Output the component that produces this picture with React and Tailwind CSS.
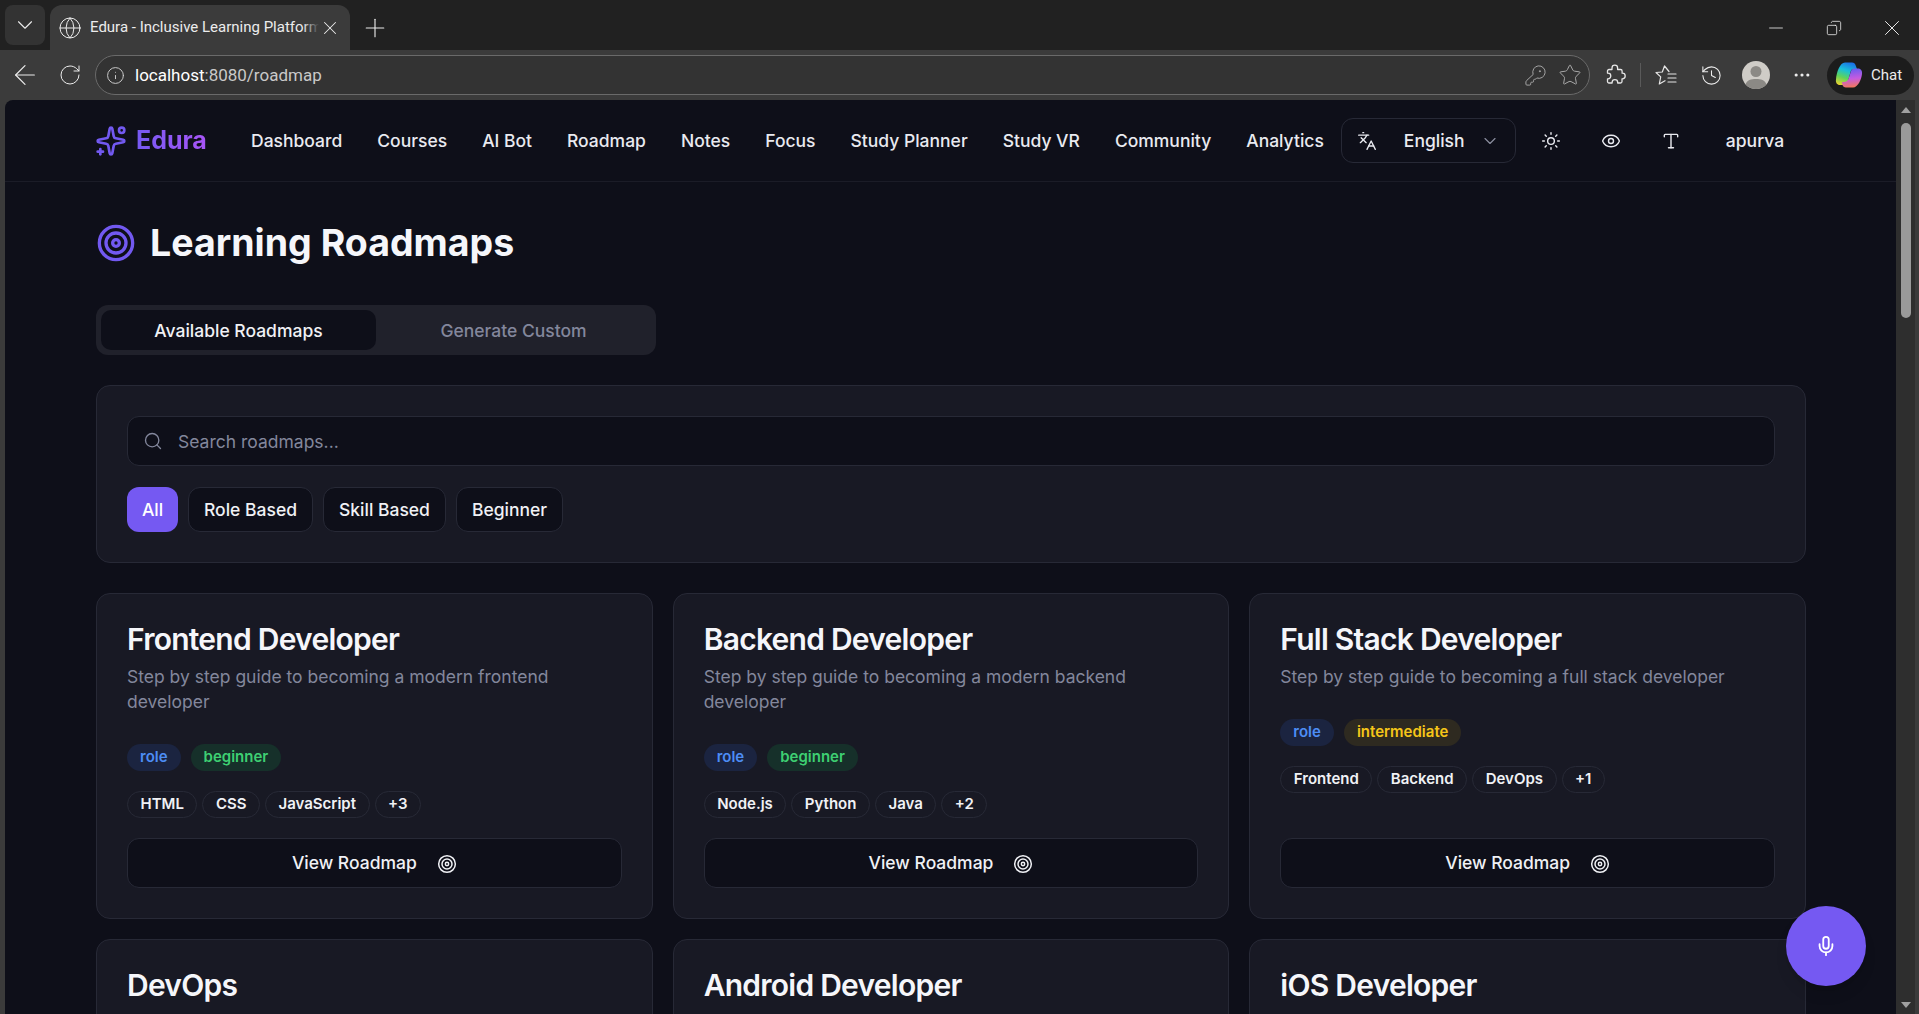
import React from "react";
import {
  ArrowLeft,
  ChevronDown,
  Copy,
  Eye,
  Globe,
  History,
  Info,
  KeyRound,
  Languages,
  Mic,
  Minus,
  MoreHorizontal,
  Plus,
  RotateCw,
  Search,
  Sparkles,
  Star,
  Sun,
  Target,
  Type,
  X,
} from "lucide-react";

const navLinks = [
  "Dashboard",
  "Courses",
  "AI Bot",
  "Roadmap",
  "Notes",
  "Focus",
  "Study Planner",
  "Study VR",
  "Community",
  "Analytics",
];

const filters = ["Role Based", "Skill Based", "Beginner"];

const roadmaps = [
  {
    title: "Frontend Developer",
    desc: "Step by step guide to becoming a modern frontend developer",
    level: "beginner",
    tags: ["HTML", "CSS", "JavaScript", "+3"],
  },
  {
    title: "Backend Developer",
    desc: "Step by step guide to becoming a modern backend developer",
    level: "beginner",
    tags: ["Node.js", "Python", "Java", "+2"],
  },
  {
    title: "Full Stack Developer",
    desc: "Step by step guide to becoming a full stack developer",
    level: "intermediate",
    tags: ["Frontend", "Backend", "DevOps", "+1"],
  },
];

const nextRow = ["DevOps", "Android Developer", "iOS Developer"];

// Edge's multicolour chat logo
function CopilotLogo() {
  return (
    <svg width="28" height="28" viewBox="0 0 28 28" fill="none">
      <defs>
        <linearGradient id="copA" x1="14" y1="1" x2="6" y2="25" gradientUnits="userSpaceOnUse">
          <stop offset="0" stopColor="#1b6fe8" />
          <stop offset="0.35" stopColor="#19c0d8" />
          <stop offset="0.65" stopColor="#5fd35a" />
          <stop offset="1" stopColor="#f5d32c" />
        </linearGradient>
        <linearGradient id="copB" x1="16" y1="8" x2="18" y2="27" gradientUnits="userSpaceOnUse">
          <stop offset="0" stopColor="#6b5cf0" />
          <stop offset="0.5" stopColor="#c45be0" />
          <stop offset="1" stopColor="#f77a52" />
        </linearGradient>
      </defs>
      <path d="M10 1.500h7c2 0 3 1 3.500 2.500L22 8h-3c-2 0-3 1-3.500 3L13 20c-.8 2.500-2.500 4-5 4H5c-3 0-4.500-2.500-4-5.500C1.500 11 5 1.500 10 1.500z" fill="url(#copA)" />
      <path d="M18 26.500h-7c-2 0-3-1-3.500-2.500L7 21h2c2.500 0 4-1.500 4.800-4L16 10c.600-1.500 1.500-2.500 3.500-2.500H23c3 0 4.500 2.500 4 5.500-.5 5-4 13.500-9 13.500z" fill="url(#copB)" />
    </svg>
  );
}

function FavoritesIcon() {
  return (
    <svg width="24" height="24" viewBox="0 0 24 24" fill="none" stroke="#e6e6e6" strokeWidth="1.2" strokeLinejoin="round" strokeLinecap="round">
      <path d="M15 8.500 10.500 3 8.300 9 2 9.500l4.700 4.400L5.300 21l5.700-3.300" />
      <path d="M14 11h8M14 15h8M14 19h8" />
    </svg>
  );
}

function PuzzleIcon() {
  return (
    <svg width="24" height="24" viewBox="0 0 24 24" fill="none" stroke="#e6e6e6" strokeWidth="1.3" strokeLinejoin="round">
      <path d="M9 5a2.800 2.800 0 0 1 5.600 0v1.500h3a1.500 1.500 0 0 1 1.500 1.500v2.200h.3a2.800 2.800 0 0 1 0 5.600H19v2.700a1.500 1.500 0 0 1-1.500 1.500h-2.800v-.5a2.800 2.800 0 0 0-5.600 0v.5H6a1.500 1.500 0 0 1-1.500-1.500v-2.700H5a2.800 2.800 0 0 0 0-5.600h-.5V8A1.500 1.500 0 0 1 6 6.500h3z" />
    </svg>
  );
}

function Avatar() {
  return (
    <svg width="28" height="28" viewBox="0 0 28 28">
      <circle cx="14" cy="14" r="14" fill="#cfccc7" />
      <circle cx="14" cy="10.500" r="5.500" fill="#8b8985" />
      <path d="M3.500 23.500c1.500-4.500 5.500-5.500 10.500-5.500s9 1 10.500 5.500A14 14 0 0 1 14 28a14 14 0 0 1-10.500-4.500z" fill="#8b8985" />
    </svg>
  );
}

function BrowserChrome() {
  return (
    <div className="shrink-0 font-['Roboto',sans-serif]">
      {/* Tab strip */}
      <div className="h-[50px] bg-[#212121] flex items-end pl-[5px] text-[#ececec]">
        <div className="h-[40px] w-[40px] mb-[5px] rounded-lg bg-[#333333] flex items-center justify-center">
          <ChevronDown size={26} strokeWidth={1} />
        </div>
        <div className="h-[45px] w-[300px] ml-[5px] rounded-t-xl bg-[#3b3b3b] flex items-center pl-[8px] pr-[9px]">
          <Globe size={24} strokeWidth={1} className="shrink-0" />
          <div className="relative ml-[8px] flex-1 overflow-hidden">
            <span className="block text-[15px] leading-[20px] whitespace-nowrap pb-[1px]">
              Edura - Inclusive Learning Platform
            </span>
            <span className="absolute right-0 top-0 bottom-0 w-[16px] bg-linear-to-r from-transparent to-[#3b3b3b]" />
          </div>
          <X size={22} strokeWidth={1.1} className="shrink-0" />
        </div>
        <div className="h-[45px] w-[50px] flex items-center justify-center">
          <Plus size={30} strokeWidth={0.9} />
        </div>
        <div className="flex-1 h-[45px] flex items-center justify-end">
          <div className="w-[58px] flex justify-center">
            <Minus size={22} strokeWidth={0.9} />
          </div>
          <div className="w-[58px] mr-[2px] flex justify-center">
            <Copy size={16} strokeWidth={1.2} className="-scale-x-100" />
          </div>
          <div className="w-[54px] flex justify-center">
            <X size={26} strokeWidth={0.9} />
          </div>
        </div>
      </div>
      {/* Address bar */}
      <div className="h-[50px] bg-[#3b3b3b] flex items-center text-[#ececec]">
        <div className="w-[45px] flex justify-center pl-[5px]">
          <ArrowLeft size={32} strokeWidth={0.9} />
        </div>
        <div className="w-[45px] flex justify-center pl-[5px]">
          <RotateCw size={24} strokeWidth={1} />
        </div>
        <div className="w-[1495px] ml-[5px] h-[40px] rounded-full border border-[#6a6a6a] bg-[#333333] flex items-center pl-[10px] pr-[7px]">
          <Info size={19} strokeWidth={1.2} className="text-[#cfcfcf]" />
          <span className="ml-[10px] pt-[1px] text-[17px] text-[#c9c9c9]">
            <span className="text-white">localhost</span>:8080/roadmap
          </span>
          <div className="ml-auto flex items-center gap-[11px] text-[#a8a8a8]">
            <KeyRound size={23} strokeWidth={1} />
            <Star size={24} strokeWidth={1} />
          </div>
        </div>
        <div className="w-[50px] flex justify-center">
          <PuzzleIcon />
        </div>
        <div className="w-px h-[24px] bg-[#5a5a5a]" />
        <div className="w-[50px] flex justify-center">
          <FavoritesIcon />
        </div>
        <div className="w-[40px] flex justify-center">
          <History size={23} strokeWidth={1.1} />
        </div>
        <div className="w-[50px] flex justify-center">
          <Avatar />
        </div>
        <div className="w-[41px] flex justify-center">
          <MoreHorizontal size={20} strokeWidth={1.8} />
        </div>
        <div className="ml-[5px] w-[87px] h-[39px] rounded-full bg-[#1c1c1c] flex items-center pl-[8px] gap-[8px] text-[15px]">
          <CopilotLogo />
          <span>Chat</span>
        </div>
      </div>
    </div>
  );
}

function Navbar() {
  return (
    <header className="h-[82px] shrink-0 border-b border-[#1b1c27] pl-[90px] flex items-center text-[#e9eaf0]">
      <div className="flex items-center gap-[9px] w-[156px] shrink-0">
        <Sparkles size={32} strokeWidth={2} className="text-[#7259f0] rotate-180" />
        <span className="text-[25px] font-bold bg-linear-to-r from-[#7559f2] to-[#a855f7] bg-clip-text text-transparent">
          Edura
        </span>
      </div>
      <nav className="flex items-center gap-[35px] text-[17.5px] font-medium whitespace-nowrap pt-[1px]">
        {navLinks.map((link) => (
          <span key={link}>{link}</span>
        ))}
      </nav>
      <div className="ml-[17px] w-[175px] h-[45px] rounded-xl border border-[#272936] flex items-center pl-[15px] pr-[15px] text-[17.5px] font-medium">
        <Languages size={20} strokeWidth={1.6} />
        <span className="ml-[27px] pt-[1px]">English</span>
        <ChevronDown size={20} strokeWidth={1.4} className="ml-auto text-[#8a8d9e]" />
      </div>
      <Sun size={20} strokeWidth={1.7} className="ml-[25px]" />
      <Eye size={20} strokeWidth={1.7} className="ml-[40px]" />
      <Type size={20} strokeWidth={1.7} className="ml-[40px]" />
      <span className="ml-[45px] pt-[1px] text-[17.5px] font-medium">apurva</span>
    </header>
  );
}

function Badge({ className, children }) {
  return (
    <span className={`h-[27px] px-[13px] rounded-full flex items-center text-[15px] font-semibold ${className}`}>
      {children}
    </span>
  );
}

function RoadmapCard({ item }) {
  const levelStyle =
    item.level === "beginner"
      ? "bg-[#16302a] text-[#3ecf72]"
      : "bg-[#2e2a20] text-[#f5c518]";

  return (
    <div className="rounded-[14px] border border-[#272936] bg-[#181924] p-[30px] flex flex-col">
      <h3 className="text-[30px] leading-[30px] font-semibold tracking-tight text-[#f5f6fa]">
        {item.title}
      </h3>
      <p className="mt-[10px] text-[17.5px] leading-[25px] text-[#83879c]">{item.desc}</p>
      <div className="mt-[30px] flex gap-[10px]">
        <Badge className="bg-[#1b2440] text-[#4d8df5]">role</Badge>
        <Badge className={levelStyle}>{item.level}</Badge>
      </div>
      <div className="mt-[20px] mb-[20px] flex gap-[5px]">
        {item.tags.map((tag) => (
          <span
            key={tag}
            className="h-[27px] px-[12.5px] rounded-full border border-[#272936] flex items-center text-[15px] font-semibold text-[#f0f1f5]"
          >
            {tag}
          </span>
        ))}
      </div>
      <button className="mt-auto h-[50px] pt-[1px] rounded-xl border border-[#272936] bg-[#0e0f19] flex items-center justify-center gap-[20px] text-[17.5px] font-medium text-[#f0f1f5]">
        View Roadmap
        <Target size={20} strokeWidth={1.8} />
      </button>
    </div>
  );
}

export default function App() {
  return (
    <div className="relative h-screen overflow-hidden bg-[#3b3b3b] flex flex-col font-['Inter',sans-serif]">
      <BrowserChrome />
      <div className="flex-1 min-h-0 flex pl-[5px]">
        <div className="relative flex-1 min-w-0 rounded-tl-lg overflow-hidden bg-[#0e0f19] flex flex-col">
          <Navbar />
          <main className="pl-[91px] pr-[90px] pt-[36px]">
            <div className="flex items-center gap-[14px]">
              <Target size={40} strokeWidth={2} className="text-[#7259f0]" />
              <h1 className="text-[37.5px] leading-[50px] font-bold text-[#f5f6fa]">Learning Roadmaps</h1>
            </div>

            {/* Tabs */}
            <div className="mt-[37px] w-[560px] h-[50px] rounded-xl bg-[#20212b] p-[5px] grid grid-cols-2 text-[17.5px] font-medium">
              <div className="rounded-[10px] bg-[#0e0f19] text-[#f0f1f5] flex items-center justify-center pt-[2px]">
                Available Roadmaps
              </div>
              <div className="text-[#83879c] flex items-center justify-center pt-[2px]">Generate Custom</div>
            </div>

            {/* Search and filters */}
            <div className="mt-[30px] rounded-[14px] border border-[#272936] bg-[#181924] p-[30px]">
              <div className="h-[50px] rounded-xl border border-[#272936] bg-[#0e0f19] flex items-center pl-[15px]">
                <Search size={20} strokeWidth={1.6} className="text-[#83879c]" />
                <span className="ml-[15px] pt-[2px] text-[17.5px] text-[#83879c]">Search roadmaps...</span>
              </div>
              <div className="mt-[21px] flex gap-[10px] text-[17.5px] font-medium">
                <span className="h-[45px] w-[51px] rounded-xl bg-[#7559f2] text-white flex items-center justify-center pt-[1px]">
                  All
                </span>
                {filters.map((filter) => (
                  <span
                    key={filter}
                    className="h-[45px] px-[15px] pt-[1px] rounded-xl border border-[#272936] bg-[#0e0f19] text-[#f0f1f5] flex items-center"
                  >
                    {filter}
                  </span>
                ))}
              </div>
            </div>

            {/* Roadmap cards */}
            <div className="mt-[30px] grid grid-cols-3 gap-[20px]">
              {roadmaps.map((item) => (
                <RoadmapCard key={item.title} item={item} />
              ))}
              {nextRow.map((title) => (
                <div key={title} className="rounded-[14px] border border-[#272936] bg-[#181924] p-[30px] h-[200px]">
                  <h3 className="text-[30px] leading-[30px] font-semibold tracking-tight text-[#f5f6fa]">{title}</h3>
                </div>
              ))}
            </div>
          </main>

          {/* Voice button */}
          <button className="absolute right-[30px] bottom-[28px] w-[80px] h-[80px] rounded-full bg-[#7559f2] text-white flex items-center justify-center shadow-lg">
            <Mic size={22} strokeWidth={2} />
          </button>
        </div>

        {/* Scrollbar */}
        <div className="w-[23px] shrink-0 flex">
          <div className="w-[19px] bg-[#2e2e2e] flex flex-col items-center pt-[7px]">
            <span className="w-0 h-0 border-x-[5px] border-x-transparent border-b-[6px] border-b-[#a0a0a0]" />
            <span className="mt-[10px] w-[10px] h-[195px] rounded-full bg-[#9a9a9a]" />
            <span className="mt-auto mb-[6px] w-0 h-0 border-x-[5px] border-x-transparent border-t-[6px] border-t-[#a0a0a0]" />
          </div>
        </div>
      </div>
    </div>
  );
}
